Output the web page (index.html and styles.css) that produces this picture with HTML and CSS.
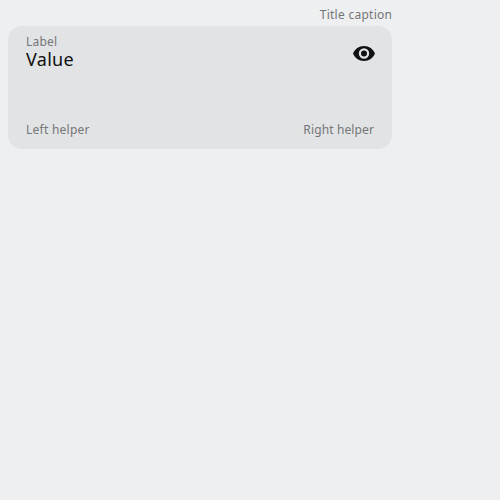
FILE: index.html
```html
<!DOCTYPE html>
<html lang="en">
<head>
<meta charset="utf-8">
<title>Text area</title>
<link rel="stylesheet" href="styles.css">
</head>
<body>
<div class="field">
  <div class="caption">Title caption</div>
  <div class="box">
    <div class="main">
      <div class="content">
        <div class="label">Label</div>
        <div class="value">Value</div>
      </div>
      <svg class="icon" viewBox="0 0.5 24 24" width="24" height="24"><path fill="#101112" fill-rule="evenodd" d="M12 4.500C7 4.500 2.700 7.600 1 12c1.700 4.400 6 7.500 11 7.500s9.300-3.100 11-7.500c-1.700-4.400-6-7.500-11-7.500zM12 17.200a5.200 5.200 0 1 1 0-10.400 5.200 5.200 0 0 1 0 10.400zM12 9a3 3 0 1 0 0 6 3 3 0 0 0 0-6z"/></svg>
    </div>
    <div class="helpers"><span class="left">Left helper</span><span class="right">Right helper</span></div>
  </div>
</div>
</body>
</html>
```
FILE: styles.css
```css
body {
  margin: 0;
  padding: 8px;
  background: #eeeff1;
  font-family: "Noto Sans", sans-serif;
  color: #101112;
}
.field { width: 384px; }
.caption {
  height: 18px;
  line-height: 14px;
  font-size: 12px;
  letter-spacing: 0.27px;
  margin-right: -0.27px;
  color: #757677;
  text-align: right;
}
.box {
  box-sizing: border-box;
  height: 123px;
  padding: 8px 18px 12px;
  border-radius: 14px;
  background: #e2e3e5;
  display: flex;
  flex-direction: column;
  justify-content: space-between;
}
.main { display: flex; justify-content: space-between; }
.label {
  font-size: 12px;
  line-height: 16px;
  letter-spacing: 0.2px;
  color: #757677;
}
.value {
  font-size: 18px;
  line-height: 18px;
  letter-spacing: 0.3px;
}
.icon { margin: 8px -2px 0 0; }
.helpers {
  display: flex;
  justify-content: space-between;
  font-size: 12px;
  line-height: 14px;
  letter-spacing: 0.25px;
  color: #757677;
}
.right { letter-spacing: 0.12px; }
```
